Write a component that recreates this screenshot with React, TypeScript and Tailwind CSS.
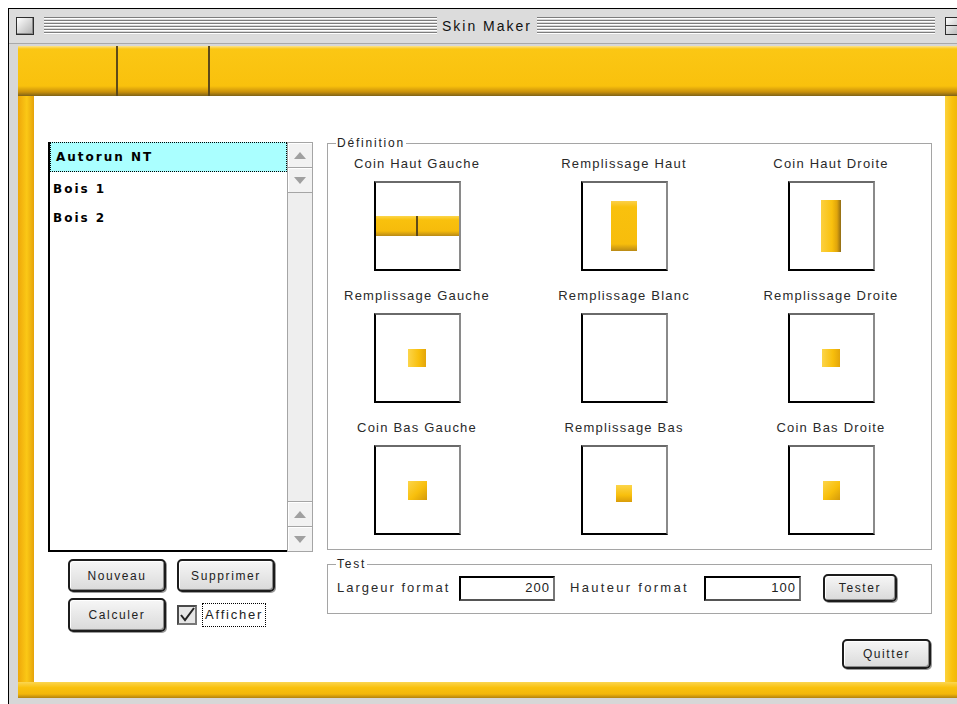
import React from 'react';

type Props = { children?: React.ReactNode; className?: string };

// Stack of grey pinstripes used on both sides of the title
const TitleStripes: React.FC<Props> = ({ className }) => (
  <div
    className={`h-[18px] bg-[repeating-linear-gradient(to_bottom,#7d7d7d_0px,#7d7d7d_1px,#ffffff_1px,#ffffff_2px,#d9d9d9_2px,#d9d9d9_3px)] ${className ?? ''}`}
  />
);

const MacButton: React.FC<Props & { label: string }> = ({ label, className }) => (
  <button
    className={`rounded-[5px] border-2 border-[#1c1c1c] bg-[linear-gradient(to_bottom,#f6f6f6,#dadada)] shadow-[inset_-1px_-1px_0_#8c8c8c,inset_1px_1px_0_#ffffff,1px_1px_0_#9a9a9a] text-[12px] tracking-[1.6px] text-[#222] leading-none ${className ?? ''}`}
  >
    {label}
  </button>
);

const Arrow: React.FC<{ up?: boolean }> = ({ up }) => (
  <svg width="12" height="7" viewBox="0 0 12 7">
    <polygon points={up ? '6,0 12,7 0,7' : '0,0 12,0 6,7'} fill="#a0a0a0" />
  </svg>
);

const ScrollButton: React.FC<{ up?: boolean; className?: string }> = ({ up, className }) => (
  <div className={`h-[25px] flex items-center justify-center bg-[#f2f2f2] shadow-[inset_1px_1px_0_#ffffff] ${className ?? ''}`}>
    <Arrow up={up} />
  </div>
);

// Frame that previews one piece of the skin
const Frame: React.FC<Props> = ({ children }) => (
  <div className="w-[87px] h-[90px] border-2 border-black border-t-[#6a6a6a] border-r-[#8a8a8a] bg-white flex items-center justify-center">
    {children}
  </div>
);

const cells: { label: string; piece: React.ReactNode }[] = [
  {
    label: 'Coin Haut Gauche',
    piece: (
      <div className="w-full h-[20px] flex">
        <div className="flex-1 border-r-2 border-[#5e4a18] bg-[linear-gradient(to_bottom,#fcd64a_0%,#f9c10d_20%,#f6bb0b_75%,#b98a16_100%)]" />
        <div className="flex-1 bg-[linear-gradient(to_bottom,#fcd64a_0%,#f9c10d_20%,#f6bb0b_75%,#b98a16_100%)]" />
      </div>
    ),
  },
  {
    label: 'Remplissage Haut',
    piece: <div className="w-[26px] h-[50px] bg-[linear-gradient(to_bottom,#fbd04a,#f9c10d_12%,#f7bd0c_86%,#b98a16)]" />,
  },
  {
    label: 'Coin Haut Droite',
    piece: <div className="w-[20px] h-[52px] bg-[linear-gradient(to_right,#fcd040,#f9c10d_55%,#e0a50b_80%,#8f6c16)]" />,
  },
  {
    label: 'Remplissage Gauche',
    piece: <div className="w-[18px] h-[18px] bg-[linear-gradient(to_right,#fcd54a,#f8bf0c_60%,#e3a50a)]" />,
  },
  { label: 'Remplissage Blanc', piece: null },
  {
    label: 'Remplissage Droite',
    piece: <div className="w-[18px] h-[18px] bg-[linear-gradient(to_right,#fcd54a,#f8bf0c_60%,#e3a50a)]" />,
  },
  {
    label: 'Coin Bas Gauche',
    piece: <div className="w-[19px] h-[19px] bg-[linear-gradient(135deg,#fcd54a,#f8bf0c_55%,#d49a0a)]" />,
  },
  {
    label: 'Remplissage Bas',
    piece: <div className="w-[16px] h-[17px] mt-[6px] bg-[linear-gradient(to_bottom,#fcd54a,#f8bf0c_60%,#d99c0a)]" />,
  },
  {
    label: 'Coin Bas Droite',
    piece: <div className="w-[17px] h-[19px] bg-[linear-gradient(135deg,#fcd54a,#f8bf0c_55%,#d49a0a)]" />,
  },
];

const rows = [cells.slice(0, 3), cells.slice(3, 6), cells.slice(6, 9)];

const App: React.FC = () => {
  return (
    <div className="w-[957px] h-[704px] overflow-hidden bg-white pl-[8px] pt-[8px] font-['Liberation_Sans',sans-serif] text-[#222]">
      <div className="w-[963px] border border-black bg-[#d7d7d7]">
        {/* title bar */}
        <div className="h-[35px] flex items-center bg-[#dcdcdc] border-b border-[#a9a9a9] pl-[7px] pr-[7px]">
          <div className="w-[18px] h-[18px] border border-[#2e2e2e] bg-[linear-gradient(135deg,#ffffff,#b0b0b0)] shadow-[inset_-1px_-1px_0_#8a8a8a]" />
          <TitleStripes className="ml-[10px] w-[393px]" />
          <span className="px-[5px] text-[14px] tracking-[2px] text-[#111] leading-none">Skin Maker</span>
          <TitleStripes className="flex-1 mr-[10px]" />
          <div className="w-[18px] h-[18px] border border-[#2e2e2e] bg-[linear-gradient(135deg,#ffffff,#b0b0b0)] flex items-end">
            <div className="w-full h-[9px] border-t border-r border-[#2e2e2e] mr-[4px]" />
          </div>
        </div>

        {/* skin frame */}
        <div className="px-[9px] pt-[2px] pb-[9px]">
          <div className="w-[943px] flex flex-col">
            <div className="h-[50px] flex bg-[linear-gradient(to_bottom,#fde38a_0px,#fbc714_3px,#f9c10d_80%,#c9900b_92%,#7e6218_100%)]">
              <div className="w-[100px] border-r-2 border-[#5e4a18]" />
              <div className="w-[92px] border-r-2 border-[#5e4a18]" />
              <div className="flex-1" />
            </div>

            <div className="h-[586px] flex">
              <div className="w-[16px] bg-[linear-gradient(to_right,#eea70a,#fbc816_55%,#e5a30a)]" />

              <div className="w-[911px] bg-white flex">
                {/* skin list and its commands */}
                <div className="ml-[14px] mt-[46px] w-[265px] flex flex-col">
                  <div className="h-[410px] flex">
                    <div className="flex-1 border-l-2 border-b-2 border-black bg-white">
                      <div className="h-[30px] flex items-center pl-[5px] bg-[#aaffff] border border-dotted border-black font-['DejaVu_Sans',sans-serif] font-bold text-[12px] tracking-[2px] text-black">
                        Autorun NT
                      </div>
                      <div className="h-[30px] flex items-center pl-[3px] pt-[4px] font-['DejaVu_Sans',sans-serif] font-bold text-[12px] tracking-[2px] text-black">
                        Bois 1
                      </div>
                      <div className="h-[30px] flex items-center pl-[3px] pt-[2px] font-['DejaVu_Sans',sans-serif] font-bold text-[12px] tracking-[2px] text-black">
                        Bois 2
                      </div>
                    </div>
                    <div className="w-[26px] flex flex-col bg-[#eeeeee] border border-[#a5a5a5]">
                      <ScrollButton up className="border-b border-[#a5a5a5]" />
                      <ScrollButton className="border-b border-[#a5a5a5]" />
                      <div className="flex-1" />
                      <ScrollButton up className="border-t border-[#a5a5a5]" />
                      <ScrollButton className="border-t border-[#a5a5a5]" />
                    </div>
                  </div>

                  <div className="mt-[7px] ml-[20px] grid grid-cols-[98px_98px] gap-x-[11px] gap-y-[6px]">
                    <MacButton label="Nouveau" className="h-[33px]" />
                    <MacButton label="Supprimer" className="h-[33px]" />
                    <MacButton label="Calculer" className="h-[34px]" />
                    <div className="flex items-center">
                      <div className="w-[20px] h-[20px] border-2 border-[#4a4a4a] border-b-[#777] border-r-[#777] bg-[#e6e6e6] flex items-center justify-center">
                        <svg width="16" height="16" viewBox="0 0 16 16">
                          <path d="M2 8 L6 13 L15 1" fill="none" stroke="#222" strokeWidth="2" />
                        </svg>
                      </div>
                      <span className="ml-[5px] h-[24px] flex items-center px-[2px] border border-dotted border-black text-[13px] tracking-[1.8px] text-[#222]">
                        Afficher
                      </span>
                    </div>
                  </div>
                </div>

                {/* definition of the selected skin */}
                <div className="ml-[14px] mt-[40px] w-[605px] flex flex-col">
                  <fieldset className="w-[605px] border border-[#a5a5a5] pb-[14px]">
                    <legend className="ml-[8px] px-[1px] text-[12px] leading-[14px] tracking-[1.8px]">Définition</legend>
                    <div className="pt-[7px] flex flex-col gap-y-[18px]">
                      {rows.map((row, i) => (
                        <div key={i} className="flex justify-between pl-[14px] pr-[25px]">
                          {row.map((cell) => (
                            <div key={cell.label} className="w-[150px] flex flex-col items-center">
                              <div className="h-[14px] leading-[14px] text-[13px] tracking-[1.2px] whitespace-nowrap text-[#2a2a2a]">
                                {cell.label}
                              </div>
                              <div className="mt-[10px]">
                                <Frame>{cell.piece}</Frame>
                              </div>
                            </div>
                          ))}
                        </div>
                      ))}
                    </div>
                  </fieldset>

                  <fieldset className="mt-[7px] w-[605px] border border-[#a5a5a5]">
                    <legend className="ml-[8px] px-[1px] text-[12px] leading-[14px] tracking-[1.8px]">Test</legend>
                    <div className="flex items-center pl-[9px] pt-[3px] pb-[11px] text-[13px] tracking-[2px] text-[#2a2a2a]">
                      <span className="w-[122px] whitespace-nowrap">Largeur format</span>
                      <div className="w-[96px] h-[25px] border-2 border-black border-r-[#777] border-b-[#555] bg-white flex items-center justify-end pr-[3px] text-[13px] tracking-[1px] text-[#222]">
                        200
                      </div>
                      <span className="ml-[15px] w-[134px] whitespace-nowrap tracking-[2.3px]">Hauteur format</span>
                      <div className="w-[97px] h-[25px] border-2 border-black border-r-[#777] border-b-[#555] bg-white flex items-center justify-end pr-[3px] text-[13px] tracking-[1px] text-[#222]">
                        100
                      </div>
                      <MacButton label="Tester" className="ml-[22px] w-[74px] h-[28px]" />
                    </div>
                  </fieldset>

                  <div className="mt-[25px] flex justify-end pr-[1px]">
                    <MacButton label="Quitter" className="w-[89px] h-[30px]" />
                  </div>
                </div>
              </div>

              <div className="w-[16px] bg-[linear-gradient(to_right,#fcd23a,#f9c10d_45%,#ebb10a)]" />
            </div>

            <div className="h-[16px] bg-[linear-gradient(to_bottom,#fbd651,#f9c10d_35%,#f3b70b_75%,#b3830f)]" />
          </div>
        </div>
      </div>
    </div>
  );
};

export default App;
